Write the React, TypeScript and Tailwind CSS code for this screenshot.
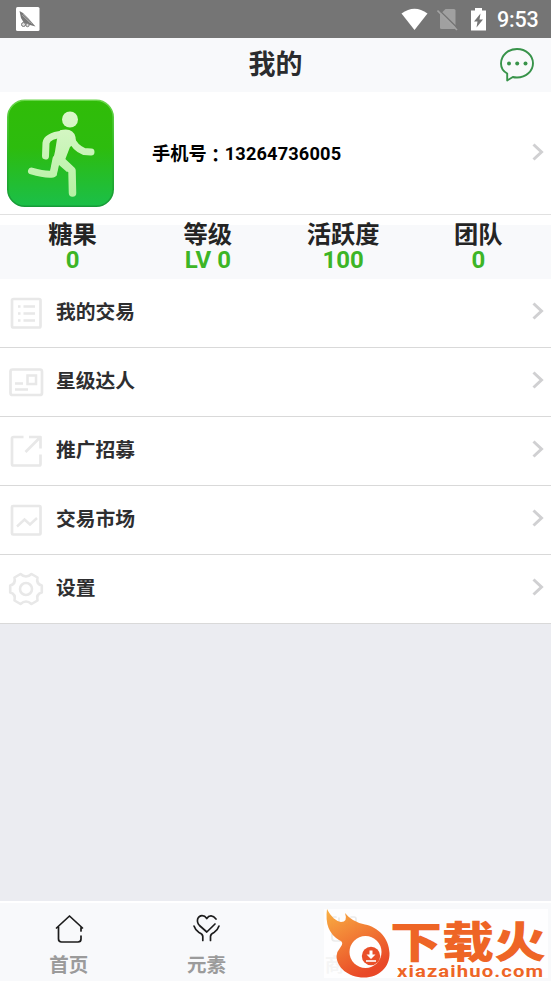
import React from 'react';

const STATS = [
  { label: '糖果', value: '0' },
  { label: '等级', value: 'LV 0' },
  { label: '活跃度', value: '100' },
  { label: '团队', value: '0' },
];

const ListIcon = () => (
  <svg className="w-9 h-9" viewBox="0 0 36 36" fill="none" stroke="currentColor" strokeWidth="2.7">
    <rect x="4" y="4" width="28.5" height="28.5" rx="1.5" />
    <path d="M10 11.500h2.500M15.500 11.500H27M10 18.500h2.500M15.500 18.500H27M10 25.500h2.500M15.500 25.500H27" strokeWidth="2.300" />
  </svg>
);

const CardIcon = () => (
  <svg className="w-9 h-9" viewBox="0 0 36 36" fill="none" stroke="currentColor" strokeWidth="2.7">
    <rect x="2.5" y="5.5" width="31.5" height="25.5" rx="2" />
    <rect x="19.5" y="11.5" width="8.500" height="8.500" strokeWidth="2.500" />
    <path d="M7 19.500h8M7 25.500h13" strokeWidth="2.500" />
  </svg>
);

const ShareIcon = () => (
  <svg className="w-9 h-9" viewBox="0 0 36 36" fill="none" stroke="currentColor" strokeWidth="2.7" strokeLinejoin="round">
    <path d="M15.500 4H5.500Q4 4 4 5.500V31Q4 32.500 5.500 32.500H31Q32.500 32.500 32.500 31V21.500" />
    <path d="M21 4h11.500v11.500M32 4.500L17.500 19" />
  </svg>
);

const TrendIcon = () => (
  <svg className="w-9 h-9" viewBox="0 0 36 36" fill="none" stroke="currentColor" strokeWidth="2.7">
    <rect x="4" y="4" width="28.500" height="28.500" rx="1" />
    <path d="M9 24.500l7.500-7 5.500 5L29 16" strokeWidth="2.400" />
  </svg>
);

const GearIcon = () => (
  <svg className="w-9 h-9" viewBox="0 0 36 36" fill="none" stroke="currentColor" strokeWidth="2.6" strokeLinejoin="round">
    <path d="M12.500 3Q18 8 23.500 3L29.500 6.500Q28 13 33.800 14.500V21.500Q28 23 29.500 29.500L23.500 33Q18 28 12.500 33L6.500 29.500Q8 23 2.200 21.500V14.500Q8 13 6.500 6.500Z" />
    <circle cx="18" cy="18" r="6" />
  </svg>
);

const MENU = [
  { label: '我的交易', Icon: ListIcon },
  { label: '星级达人', Icon: CardIcon },
  { label: '推广招募', Icon: ShareIcon },
  { label: '交易市场', Icon: TrendIcon },
  { label: '设置', Icon: GearIcon },
];

const Chevron = () => (
  <svg className="w-3 h-5 shrink-0" viewBox="0 0 12 20" fill="none" stroke="#d0d0d2" strokeWidth="3">
    <path d="M1.500 2.500L9.500 10L1.500 17.500" />
  </svg>
);

const StatusBar = () => (
  <div className="h-[38px] bg-[#757575] flex items-center justify-between pl-4 pr-3">
    <svg className="w-6 h-6" viewBox="0 0 24 24">
      <rect width="23.500" height="24" rx="1.500" fill="#fff" />
      <path d="M3.500 4L7 6L12 11L15.500 15L19.500 19.500L14 18L8 16L5 11Z" fill="#777" />
      <path d="M6 8l8 8M7 7l9 10" stroke="#bbb" strokeWidth=".6" />
      <g fill="#ddd" stroke="#777">
        <circle cx="7.500" cy="17.500" r="2" />
        <circle cx="11.500" cy="18" r="1.700" />
      </g>
    </svg>
    <div className="flex items-center">
      <svg className="w-[27px] h-[23px]" viewBox="0 0 27 23">
        <path d="M.5 5.500Q13.500-4 26.500 5.500L13.500 22Z" fill="#fff" />
      </svg>
      <svg className="w-[21px] h-[23px] ml-[9px]" viewBox="0 0 21 23">
        <path d="M8.500 1H17Q18.500 1 18.500 2.500V19.500Q18.500 21 17 21H4.500Q3 21 3 19.500V6.500Z" fill="#a0a0a0" />
        <path d="M1.500 1.500L21 20.500" stroke="#757575" strokeWidth="1.500" />
        <path d="M.5 2.500L20 22" stroke="#a3a3a3" strokeWidth="1.600" />
      </svg>
      <svg className="w-[15px] h-[23px] ml-[13px]" viewBox="0 0 15 23">
        <path d="M0 2.500H4V0H11V2.500H15V22.500H0Z" fill="#fff" />
        <path d="M9.500 5.500L3 13.500h3.500L5.500 19.500L12 11.500H8.500Z" fill="#757575" />
      </svg>
      <span className="ml-[11px] w-[42px] pt-0.5 text-[21.500px] leading-none text-white font-medium tracking-[-0.200px] whitespace-nowrap">9:53</span>
    </div>
  </div>
);

const Header = () => (
  <div className="h-[54px] bg-[#f8f9fb] grid grid-cols-3 items-center">
    <span />
    <h1 className="text-center text-[27px] leading-none font-bold text-[#2b2c2e]">我的</h1>
    <svg className="w-[34px] h-[34px] justify-self-end mr-[17px]" viewBox="0 0 34 34" fill="none" stroke="#38934a" strokeWidth="1.900">
      <path d="M7.200 32.500V25.500C3.500 23.500 1 19.800 1 15.500C1 7.500 8 1 17 1S33 7.500 33 15.300S26 29.500 17 29.500Q14.500 29.500 12.800 29Z" strokeLinejoin="round" />
      <g fill="#38934a" stroke="none">
        <circle cx="9" cy="15.500" r="2" />
        <circle cx="17.200" cy="15.500" r="2" />
        <circle cx="25.500" cy="15.500" r="2" />
      </g>
    </svg>
  </div>
);

// rounded green tile with the running figure
const Avatar = () => (
  <svg className="w-[107px] h-[108px]" viewBox="0 0 107 108">
    <defs>
      <linearGradient id="tile" x1="0" y1="0" x2="0" y2="1">
        <stop offset="0" stopColor="#30bc08" />
        <stop offset=".45" stopColor="#2dbc0e" />
        <stop offset="1" stopColor="#1bbf49" />
      </linearGradient>
      <linearGradient id="edge" x1="0" y1="0" x2="0" y2="1">
        <stop offset="0" stopColor="#69d64a" />
        <stop offset=".5" stopColor="#2fb52a" />
        <stop offset="1" stopColor="#169b38" />
      </linearGradient>
      <linearGradient id="runner" gradientUnits="userSpaceOnUse" x1="0" y1="12" x2="0" y2="98">
        <stop offset="0" stopColor="#dcf7cb" />
        <stop offset="1" stopColor="#b5f1a3" />
      </linearGradient>
    </defs>
    <rect x=".8" y="1.300" width="105.400" height="105.900" rx="17" fill="url(#tile)" stroke="url(#edge)" strokeWidth="1.600" />
    <g fill="none" stroke="url(#runner)" strokeLinecap="round" strokeLinejoin="round">
      <path d="M56 35Q40 37 39 44L38.500 57" strokeWidth="7" />
      <path d="M63 38Q68 49 77 52.500L84 53" strokeWidth="7" />
      <path d="M49 60L46 75Q38 76 24.500 72" strokeWidth="7" />
      <path d="M56 63L65 71.500L65.500 94" strokeWidth="7.500" />
    </g>
    <g fill="url(#runner)">
      <circle cx="63" cy="20.500" r="8" />
      <path d="M53 31.300Q66 28 68.500 38L69 43L63 48L58 61L66 68L60 73L52 66L49.500 77L43 74L48 52.500L50 40Z" />
    </g>
  </svg>
);

const Profile = () => (
  <div className="h-[123px] bg-white border-b border-[#e1e1e1] flex items-center pl-[7px] pr-[7px]">
    <Avatar />
    <div className="ml-[38px] pt-px flex-1 flex items-center text-[18.200px] leading-[20px] font-bold text-black">
      <span>手机号</span>
      <span className="font-['Noto_Sans_CJK_TC',sans-serif]">：</span>
      <span className="tracking-[0.150px]">13264736005</span>
    </div>
    <div className="pb-[3px]"><Chevron /></div>
  </div>
);

const Stats = () => (
  <div className="bg-white pt-1.5">
    <div className="h-[58px] bg-[linear-gradient(#fff_4px,#f8f9fb_4px)] grid grid-cols-4 px-[5px]">
      {STATS.map(stat => (
        <div key={stat.label} className="flex flex-col items-center font-bold">
          <span className="pt-px text-[24.300px] leading-[25px] text-[#242424]">{stat.label}</span>
          <span className="text-[24px] leading-[26px] text-[#3db526]">{stat.value}</span>
        </div>
      ))}
    </div>
  </div>
);

const HomeIcon = () => (
  <svg className="w-[30px] h-[30px]" viewBox="0 0 30 30" fill="none" stroke="#1c1c1c" strokeWidth="1.700" strokeLinecap="round" strokeLinejoin="round">
    <path d="M2.500 14L15.500 2L28.500 14L27 13.500V17M27 22V25Q27 28 24 28H7.500Q4.500 28 4.500 25V13" />
  </svg>
);

const HeartIcon = () => (
  <svg className="w-[30px] h-[30px]" viewBox="0 0 30 30" fill="none" stroke="#1c1c1c" strokeWidth="1.700" strokeLinecap="round" strokeLinejoin="round">
    <path d="M24 5C21 1 17 1 14.800 4.500C12 .5 7.500 1 5.800 4.500C4.800 7.500 5.500 9.500 7.500 11.500L14.800 18L23 10" />
    <path d="M2 12Q3.500 16.500 7 18.500Q10.800 20 10.800 22.500V26.500M27 12Q25.500 16.500 22 18.500Q18.500 20 18.500 22.500V26.500" />
  </svg>
);

const ShopIcon = () => (
  <svg className="w-[30px] h-[30px]" viewBox="0 0 30 30" fill="none" stroke="#333" strokeWidth="1.700" strokeLinecap="round">
    <path d="M7 3H5Q3 3 3 5V24Q3 27 6 27H14M22 3H25Q27 3 27 5V18M10 4V7Q10 12 15 12T20 7V4" />
  </svg>
);

const TABS = [
  { label: '首页', Icon: HomeIcon },
  { label: '元素', Icon: HeartIcon },
  { label: '商城', Icon: ShopIcon },
];

const Flame = () => (
  <svg className="w-[66px] h-[70px] shrink-0" viewBox="0 0 66 70">
    <defs>
      <linearGradient id="flame" x1="0" y1="0" x2=".5" y2="1">
        <stop offset="0" stopColor="#f8ad3c" />
        <stop offset=".5" stopColor="#f1762c" />
        <stop offset="1" stopColor="#e8401e" />
      </linearGradient>
    </defs>
    <path
      d="M3 0C7 8 12 12 17 13Q24 13 21 4Q28 13 41 15.500C54 18 65 29 65.500 44C66 58 55 68.500 40 68.500C24 68.500 12.500 58 12.500 47Q12.500 43 16 39Q21 33 15 31Q0 22 3 0Z"
      fill="url(#flame)"
      fillOpacity=".96"
    />
    <circle cx="41.500" cy="43" r="16" fill="#fff" />
    <circle cx="47" cy="47" r="9.200" fill="#e9502a" />
    <path d="M45.500 41.500h3v4h3L47 50l-4.500-4.500h3Z" fill="#fff" />
    <path d="M42 52h10" stroke="#fff" strokeWidth="1.600" />
  </svg>
);

const Banner = () => (
  <div className="absolute left-[324px] top-[6px] w-[224px] h-[69px] bg-white/90 flex">
    <Flame />
    <div className="flex flex-col">
      <span className="mt-[13px] h-[42px] w-[128px] text-[43px] leading-[42px] font-black text-[#ee6526] whitespace-nowrap origin-left scale-x-[1.210]">下载火</span>
      <span className="ml-[7px] mt-px h-[13px] w-[114px] text-[16.500px] leading-[13px] font-bold text-[#ee6526] tracking-[0.900px] whitespace-nowrap origin-left scale-x-[1.230]">xiazaihuo.com</span>
    </div>
  </div>
);

const TabBar = () => (
  <div className="relative h-20 bg-[#f8f9fb] border-t-2 border-white grid grid-cols-4">
    {TABS.map(({ label, Icon }) => (
      <div key={label} className="flex flex-col items-center pt-[11px]">
        <Icon />
        <span className="mt-[10px] text-[19.500px] leading-[24px] font-bold text-[#9b9b9b]">{label}</span>
      </div>
    ))}
    <Banner />
  </div>
);

const App: React.FC = () => {
  return (
    <div className="w-[551px] h-[981px] overflow-hidden flex flex-col bg-[#ebecf1] font-[Roboto,'Noto_Sans_CJK_SC',sans-serif]">
      <StatusBar />
      <Header />
      <Profile />
      <Stats />
      {MENU.map(({ label, Icon }) => (
        <div key={label} className="h-[69px] shrink-0 bg-white border-b border-[#d9d9d9] flex items-center pl-2 pr-[7px]">
          <span className="text-[#e8e8e8]"><Icon /></span>
          <span className="ml-3 flex-1 text-[19.800px] leading-none font-bold text-[#2e2e30]">{label}</span>
          <div className="pb-1"><Chevron /></div>
        </div>
      ))}
      <div className="flex-1" />
      <TabBar />
    </div>
  );
};

export default App;
